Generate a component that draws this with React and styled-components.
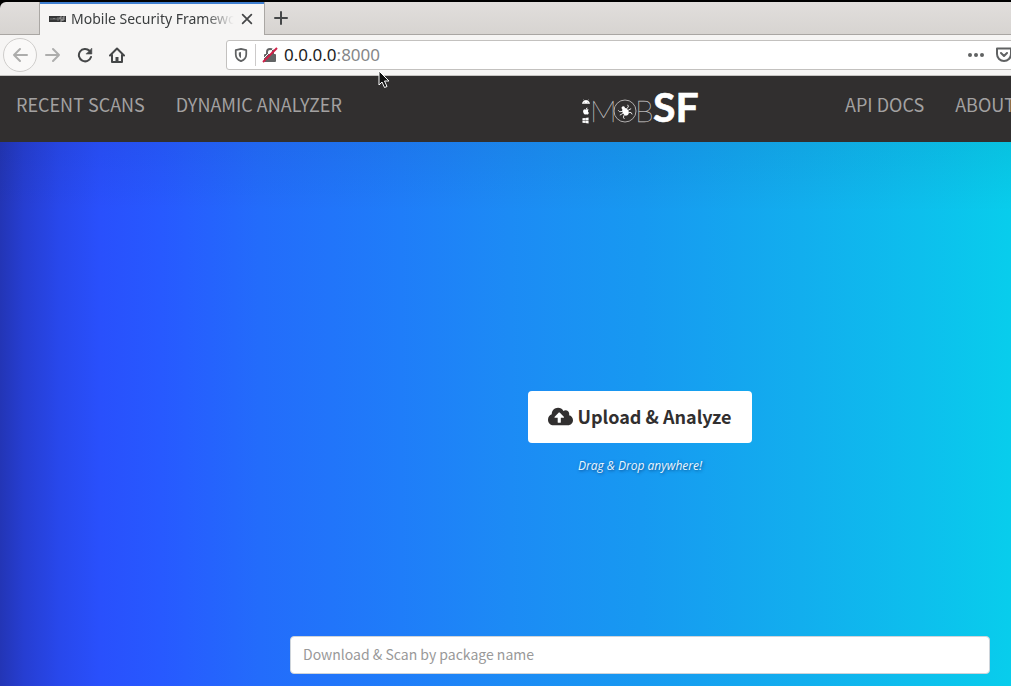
import React from "react";
import styled, { createGlobalStyle } from "styled-components";
import { FaAndroid, FaApple, FaCloudUploadAlt, FaWindows } from "react-icons/fa";

const chromeFont = `"Noto Sans", "Open Sans", sans-serif`;
const siteFont = `"Noto Sans CJK SC", "Noto Sans", sans-serif`;

const GlobalStyle = createGlobalStyle`
  *, *::before, *::after { box-sizing: border-box; }
  body { margin: 0; background: #000; }
  button, input { font: inherit; margin: 0; }
`;

const Viewport = styled.div`
  position: relative;
  overflow: hidden;
  min-height: 100vh;
`;

const Browser = styled.div`
  display: flex;
  flex-direction: column;
  min-width: 1280px;
  min-height: 100vh;
  padding-top: 2px;
  font-family: ${chromeFont};
`;

const TabStrip = styled.div`
  display: flex;
  height: 33px;
  background: linear-gradient(#e1dedc, #d7d4d1);
  border-bottom: 1px solid #a9a6a3;
  border-top-left-radius: 6px;
  padding-left: 39px;
`;

const Tab = styled.div`
  display: flex;
  align-items: center;
  gap: 5px;
  width: 226px;
  height: 33px;
  padding: 0 9px;
  background: #f6f5f4;
  border: solid #aaa7a4;
  border-width: 0 1px;
  box-shadow: inset 0 2px #3f7fd0;
`;

const TabTitle = styled.span`
  flex: 1;
  min-width: 0;
  overflow: hidden;
  white-space: nowrap;
  font-size: 14px;
  line-height: 20px;
  color: #3b3e3f;
  mask-image: linear-gradient(to right, #000 82%, transparent);
`;

const IconButton = styled.button`
  display: flex;
  align-items: center;
  justify-content: center;
  width: ${(p) => p.$size}px;
  height: ${(p) => p.$size}px;
  padding: 0;
  border: ${(p) => (p.$ring ? "1px solid #cfcdcb" : "0")};
  border-radius: 50%;
  background: ${(p) => (p.$ring ? "#faf9f8" : "transparent")};
  color: ${(p) => (p.$dim ? "#adadac" : p.$soft ? "#606263" : "#454748")};
`;

const Toolbar = styled.div`
  display: flex;
  align-items: center;
  height: 41px;
  padding: 0 226px 0 3px;
  background: #f6f5f4;
  border-bottom: 1px solid #c6c4c2;
`;

const NavButtons = styled.div`
  display: flex;
  align-items: center;
  width: 223px;
`;

const AddressBar = styled.div`
  display: flex;
  align-items: center;
  flex: 1;
  height: 30px;
  padding: 0 35px 0 7px;
  background: #fff;
  border: 1px solid #c3c1bf;
  border-radius: 3px;
  color: #606263;
`;

const Divider = styled.span`
  width: 1px;
  height: 22px;
  margin: 0 6px 0 7px;
  background: #cccaca;
`;

const Url = styled.span`
  flex: 1;
  padding-left: 6px;
  font-size: 17px;
  line-height: 20px;
  color: #1c1d1e;
`;

const Port = styled.span`
  color: #858788;
`;

const Site = styled.div`
  display: flex;
  flex: 1;
  flex-direction: column;
  font-family: ${siteFont};
`;

const SiteNav = styled.nav`
  display: grid;
  grid-template-columns: 1fr auto 1fr;
  height: 66px;
  padding: 0 16px;
  background: #312f2f;
`;

const NavGroup = styled.div`
  display: flex;
  gap: 31px;
  padding-top: 13px;
  padding-left: ${(p) => (p.$right ? "146px" : "0")};
`;

const NavLink = styled.a`
  color: #a3a1a1;
  font-size: 18px;
  line-height: 30px;
  white-space: nowrap;
  text-decoration: none;
`;

const LogoLink = styled.a`
  display: block;
  padding-top: 12px;
  color: #fff;
`;

const Hero = styled.main`
  display: flex;
  flex: 1;
  flex-direction: column;
  align-items: center;
  padding: 249px 0 12px;
  background:
    linear-gradient(rgba(0, 20, 40, 0.06), transparent 70px),
    linear-gradient(
      to right,
      #2335b5 0,
      #263ed2 24px,
      #2848ec 60px,
      #2950fc 100px,
      #2759ff 160px,
      #236cfb 260px,
      #1f7df9 400px,
      #1c8bf5 510px,
      #1799f1 640px,
      #12aeee 800px,
      #0dbfed 920px,
      #08cdec 1011px,
      #06d6ee 1280px
    );
`;

const UploadButton = styled.button`
  display: flex;
  align-items: center;
  justify-content: center;
  gap: 4px;
  width: 224px;
  height: 52px;
  padding: 0 0 2px;
  border: 0;
  border-radius: 4px;
  background: #fff;
  color: #312f2f;
  font-size: 18px;
  font-weight: 700;
  line-height: 26px;
`;

const DropHint = styled.em`
  margin-top: 14px;
  color: #eaf6ff;
  font-family: "Open Sans", sans-serif;
  font-size: 12px;
  line-height: 18px;
  text-shadow: 1px 1px 3px rgba(0, 30, 80, 0.6);
`;

const PackageInput = styled.input`
  width: 700px;
  height: 38px;
  margin-top: auto;
  padding: 0 12px 2px;
  border: 1px solid #ced4da;
  border-radius: 4px;
  background: #fff;
  color: #333;
  font-size: 14px;
  &::placeholder {
    color: #999;
    opacity: 1;
  }
`;

const Pointer = styled.svg`
  position: absolute;
  left: 377px;
  top: 69px;
  pointer-events: none;
`;

function Favicon() {
  return (
    <svg width="17" height="8" viewBox="0 0 17 8" aria-hidden="true">
      <rect y="1" width="17" height="6" fill="#343536" />
      <path d="M2 3v2M4 5V3l1 1 1-1v2M8 3h2v2H8z" stroke="#8d8d8d" strokeWidth=".7" fill="none" />
      <path d="M13 2h-2v2h2v2h-2M14 6V2h2M14 4h2" stroke="#bbb" strokeWidth=".8" fill="none" />
    </svg>
  );
}

function Stroke({ size = 16, width = 2, children }) {
  return (
    <svg width={size} height={size} viewBox="0 0 16 16" fill="none" stroke="currentColor"
      strokeWidth={width} strokeLinecap="round" strokeLinejoin="round" aria-hidden="true">
      {children}
    </svg>
  );
}

function Logo() {
  const thin = {
    fontFamily: "Lato",
    fontWeight: 100,
    fontSize: 30,
    fill: "#b9b7b7",
    stroke: "#b9b7b7",
    strokeWidth: 0.3,
  };
  return (
    <svg width="118" height="40" viewBox="0 0 118 40" fill="#fff" role="img" aria-label="MobSF">
      <FaAndroid x="1" y="10" size={8} />
      <FaApple x="1" y="19" size={8} />
      <FaWindows x="1" y="29" size={7} />
      <text x="9" y="34" {...thin}>M</text>
      <circle cx="44" cy="23" r="11" fill="none" stroke="#b0aeae" />
      <g transform="rotate(-30 44 23)">
        <ellipse cx="44" cy="24" rx="3" ry="3.800" />
        <circle cx="44" cy="19.500" r="1.700" />
        <path
          d="M41.500 22l-2.500-1-.5-2M46.500 22l2.500-1 .5-2M41 24h-3.500M47 24h3.500M41.500 26l-2 1.500v2M46.500 26l2 1.500v2"
          fill="none" stroke="#fff" strokeWidth=".8"
        />
      </g>
      <text x="54" y="34" {...thin}>B</text>
      <text x="72" y="34" fontFamily="Lato" fontWeight="700" fontSize="41" stroke="#fff" strokeWidth=".6">SF</text>
    </svg>
  );
}

export default function App() {
  return (
    <Viewport>
      <GlobalStyle />
      <Browser>
        <TabStrip>
          <Tab>
            <Favicon />
            <TabTitle>Mobile Security Framework</TabTitle>
            <IconButton $size={16} aria-label="Close tab">
              <Stroke size={14} width={2}><path d="M3 3l10 10M13 3L3 13" /></Stroke>
            </IconButton>
          </Tab>
          <IconButton $size={32} aria-label="New tab">
            <Stroke><path d="M8 2v12M2 8h12" /></Stroke>
          </IconButton>
        </TabStrip>

        <Toolbar>
          <NavButtons>
            <IconButton $size={34} $ring $dim aria-label="Back">
              <Stroke size={16}><path d="M15 8H2M8 2L2 8l6 6" /></Stroke>
            </IconButton>
            <IconButton $size={32} $dim aria-label="Forward">
              <Stroke size={16}><path d="M1 8h13M8 2l6 6-6 6" /></Stroke>
            </IconButton>
            <IconButton $size={32} aria-label="Reload">
              <Stroke><path d="M14 10A6.200 6.200 0 1 1 12.500 3.800" /><path d="M14.800 1.500V7H9.300z" fill="currentColor" strokeWidth=".6" /></Stroke>
            </IconButton>
            <IconButton $size={32} aria-label="Home">
              <Stroke><path d="M1 8.500L8 1.500l7 7M3 8v7h10V8" /><path d="M8 14v-4" strokeWidth="3" strokeLinecap="butt" /></Stroke>
            </IconButton>
          </NavButtons>
          <AddressBar>
            <Stroke size={14}>
              <path d="M8 1L2 2.500V7c0 4 2.500 6.500 6 8 3.500-1.500 6-4 6-8V2.500z" />
              <path d="M8 4.500v7C6.300 10.500 5.500 9 5.500 7V5z" fill="currentColor" stroke="none" />
            </Stroke>
            <Divider />
            <svg width="16" height="16" viewBox="0 0 16 16" aria-hidden="true">
              <path d="M5 8V5a3 3 0 0 1 6 0v3" fill="none" stroke="#626465" strokeWidth="2" />
              <rect x="2" y="7" width="12" height="8" rx="1" fill="#626465" />
              <path d="M0 13L13 0" stroke="#fff" strokeWidth="1" />
              <path d="M1 15L15 1" stroke="#cf2148" strokeWidth="2" />
            </svg>
            <Url>0.0.0.0<Port>:8000</Port></Url>
            <IconButton $size={28} $soft aria-label="Page actions">
              <svg width="16" height="16" viewBox="0 0 16 16" fill="currentColor">
                <circle cx="2" cy="8" r="2" /><circle cx="8" cy="8" r="2" /><circle cx="14" cy="8" r="2" />
              </svg>
            </IconButton>
            <IconButton $size={28} $soft aria-label="Save to Pocket">
              <Stroke><path d="M1 1.500h14V7A7 7 0 0 1 1 7zM5 6l3 3 3-3" /></Stroke>
            </IconButton>
          </AddressBar>
        </Toolbar>

        <Site>
          <SiteNav>
            <NavGroup>
              <NavLink href="#recent">RECENT SCANS</NavLink>
              <NavLink href="#dynamic">DYNAMIC ANALYZER</NavLink>
            </NavGroup>
            <LogoLink href="#home"><Logo /></LogoLink>
            <NavGroup $right>
              <NavLink href="#api">API DOCS</NavLink>
              <NavLink href="#about">ABOUT</NavLink>
            </NavGroup>
          </SiteNav>
          <Hero>
            <UploadButton>
              <FaCloudUploadAlt size={25} />
              Upload &amp; Analyze
            </UploadButton>
            <DropHint>Drag &amp; Drop anywhere!</DropHint>
            <PackageInput placeholder="Download &amp; Scan by package name" aria-label="Package name" />
          </Hero>
        </Site>
      </Browser>
      <Pointer width="14" height="21" viewBox="0 0 14 21" aria-hidden="true">
        <path d="M2 2v14l3-3 2.500 5.500 2.500-1L7.500 12H12z" fill="#111" stroke="#fff" />
      </Pointer>
    </Viewport>
  );
}
